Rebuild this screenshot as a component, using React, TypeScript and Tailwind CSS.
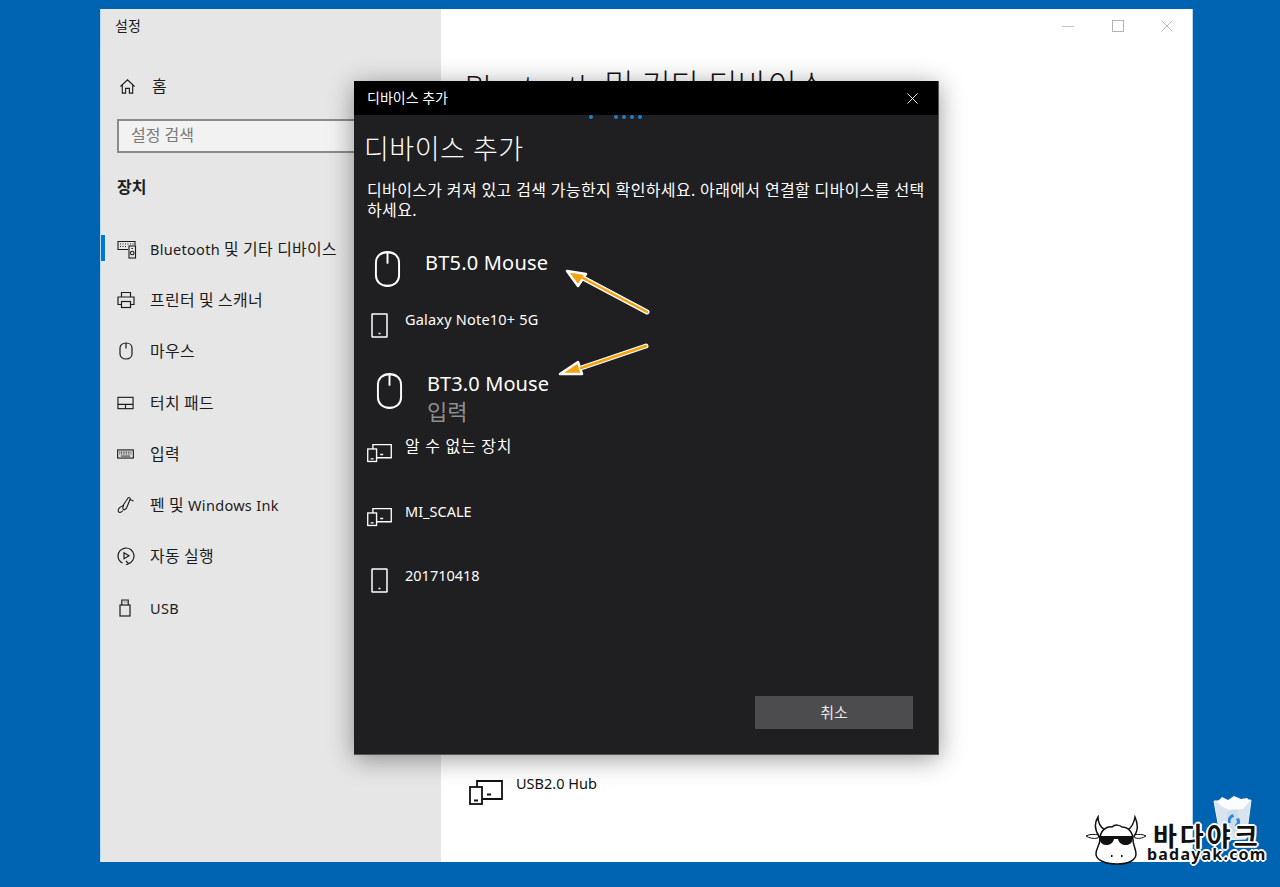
import React from 'react';

const FONT = "font-['Noto_Sans','Noto_Sans_CJK_KR',sans-serif]";

type IconProps = { className?: string };

// hangul runs sit a bit larger than the latin around them
function Mixed({ text }: { text: string }) {
	const parts = text.split(/([\uac00-\ud7a3]+)/);
	return (
		<>
			{parts.map((p, i) =>
				i % 2 === 1 ? (
					<span key={i} className="text-[1.1em]">
						{p}
					</span>
				) : (
					<React.Fragment key={i}>{p}</React.Fragment>
				),
			)}
		</>
	);
}

function Home({ className }: IconProps) {
	return (
		<svg viewBox="0 0 18 18" fill="none" stroke="currentColor" strokeWidth="1.2" className={className}>
			<path d="M1.500 9 9 2l7.500 7M3.500 7.500V16h3.500v-5h4v5h3.500V7.500" />
		</svg>
	);
}

function BtDevices({ className }: IconProps) {
	return (
		<svg viewBox="0 0 20 20" fill="none" stroke="currentColor" strokeWidth="1.1" className={className}>
			<path d="M11 10.500H1V2.500h17v4" />
			<path d="M3 5h1M5.500 5h1M8 5h1M10.500 5h1M13 5h1M15.500 5h1M3 7.500h1M5.500 7.500h1M8 7.500h1" />
			<rect x="12" y="7" width="6.500" height="12" />
			<circle cx="15.250" cy="14" r="1.800" />
			<path d="M14.500 9.500h1.500" />
		</svg>
	);
}

function Printer({ className }: IconProps) {
	return (
		<svg viewBox="0 0 18 18" fill="none" stroke="currentColor" strokeWidth="1.2" className={className}>
			<path d="M4.500 6V1.500h9V6M4.500 13.500H1V6h16v7.500h-3.500" />
			<rect x="4.500" y="10.500" width="9" height="6" />
		</svg>
	);
}

function Mouse({ className, sw = 1.2 }: IconProps & { sw?: number }) {
	return (
		<svg viewBox="0 0 14 18" preserveAspectRatio="none" fill="none" stroke="currentColor" strokeWidth={sw} className={className}>
			<path d="M1 6C1 3 3.500 1 7 1s6 2 6 5v6c0 3-2.500 5-6 5s-6-2-6-5Z" />
			<path d="M7 1v5.500" />
		</svg>
	);
}

function Touchpad({ className }: IconProps) {
	return (
		<svg viewBox="0 0 18 14" fill="none" stroke="currentColor" strokeWidth="1.2" className={className}>
			<rect x="1" y="1" width="16" height="12" />
			<path d="M1 8.500h16M9 8.500V13" />
		</svg>
	);
}

function Keyboard({ className }: IconProps) {
	return (
		<svg viewBox="0 0 18 10" fill="none" stroke="currentColor" className={className}>
			<rect x="0.700" y="0.700" width="16.600" height="8.600" strokeWidth="1.200" />
			<path d="M2.500 3h13M2.500 5h13" strokeWidth="1.100" strokeDasharray="1 .8" />
			<path d="M4 7.200h10" strokeWidth="1" />
		</svg>
	);
}

function Pen({ className }: IconProps) {
	return (
		<svg viewBox="0 0 18 18" fill="none" stroke="currentColor" strokeWidth="1.100" className={className}>
			<path d="M6 9.500 11 2c.8-1 2.500-.2 2.200 1L10 11c-.8 2-2.500 3-3.500 2.500s-.8-2 0-4Z" />
			<path d="M13 3.500 16.500 5M6 10C3 10.500 1 13 1.200 15c.3 2 3 1.800 4.800-.5" />
		</svg>
	);
}

function AutoPlay({ className }: IconProps) {
	return (
		<svg viewBox="0 0 18 18" fill="none" stroke="currentColor" strokeWidth="1.200" className={className}>
			<path d="M5.500 16C2.800 14.700 1 12 1 9a8 8 0 1 1 10.500 7.600" />
			<path d="M7 5.800v6l5-3Z" />
			<path d="m9 14 2.500 2.700L9 18" />
		</svg>
	);
}

function Usb({ className }: IconProps) {
	return (
		<svg viewBox="0 0 12 18" fill="none" stroke="currentColor" strokeWidth="1.200" className={className}>
			<rect x="1" y="6" width="10" height="11" />
			<path d="M2.800 6V1h6.400v5M4.800 3h.8M6.800 3h.8" />
		</svg>
	);
}

function Phone({ className }: IconProps) {
	return (
		<svg viewBox="0 0 17 25" fill="none" stroke="currentColor" strokeWidth="1.500" className={className}>
			<rect x="1" y="1" width="15" height="23" rx="0.500" />
			<path d="M7.500 20.500h2" />
		</svg>
	);
}

function Combo({ className }: IconProps) {
	return (
		<svg viewBox="0 0 34 25" fill="none" stroke="currentColor" strokeWidth="1.800" className={className}>
			<path d="M8 7V1h25v18H13" />
			<rect x="1" y="7" width="12" height="17" />
			<path d="M5 20.500h4M18 14.500h4" strokeWidth="2" />
		</svg>
	);
}

function CloseX({ className }: IconProps) {
	return (
		<svg viewBox="0 0 12 12" fill="none" stroke="currentColor" strokeWidth="1" className={className}>
			<path d="m.5.500 11 11M11.500.500l-11 11" />
		</svg>
	);
}

const NAV = [
	{ label: 'Bluetooth 및 기타 디바이스', icon: <BtDevices className="w-[20px] h-[20px]" />, active: true },
	{ label: '프린터 및 스캐너', icon: <Printer className="w-[18px] h-[18px]" /> },
	{ label: '마우스', icon: <Mouse className="w-[14px] h-[18px] ml-[2px]" /> },
	{ label: '터치 패드', icon: <Touchpad className="w-[17px] h-[14px]" /> },
	{ label: '입력', icon: <Keyboard className="w-[17px] h-[10px]" /> },
	{ label: '펜 및 Windows Ink', icon: <Pen className="w-[18px] h-[18px]" /> },
	{ label: '자동 실행', icon: <AutoPlay className="w-[18px] h-[18px]" /> },
	{ label: 'USB', icon: <Usb className="w-[12px] h-[18px] ml-[2px]" /> },
];

function Sidebar() {
	return (
		<aside className="w-[341px] shrink-0 bg-[#e6e6e6] text-[#1c1c1c] border-l border-[#bcdcf4] flex flex-col">
			<div className="pl-[14px] pt-[8px] text-[14px] leading-[18px]">설정</div>
			<div className="flex items-center h-[24px] mt-[39px] pl-[18px] text-[16px]">
				<Home className="w-[17px] h-[17px]" />
				<span className="ml-[16px]">홈</span>
			</div>
			<div className="mt-[21px] ml-[16px] w-[307px] h-[34px] bg-[#f2f2f2] border-2 border-[#8b8b8b] pl-[12px] pb-[3px] flex items-center text-[16px] text-[#7a7a7a]">
				설정 검색
			</div>
			<div className="mt-[23px] ml-[16px] text-[16px] font-bold leading-[22px]">장치</div>
			<nav className="mt-[25px] flex flex-col">
				{NAV.map(item => (
					<div key={item.label} className="relative h-[51.300px] flex items-center pl-[16px] text-[14.500px] leading-[20px] tracking-[0.3px]">
						{item.active && <span className="absolute left-0 top-[12px] w-[4px] h-[26px] bg-[#0078d7]" />}
						<span className="w-[33px] flex items-center shrink-0">{item.icon}</span>
						<span>
							<Mixed text={item.label} />
						</span>
					</div>
				))}
			</nav>
		</aside>
	);
}

function Main() {
	return (
		<main className="flex-1 bg-white flex flex-col text-[#111]">
			<div className="flex justify-end items-center h-[34px] text-[#b9b9b9]">
				<span className="w-[12px] h-[1px] bg-[#c4c4c4] mr-[38px]" />
				<span className="w-[12px] h-[12px] border border-[#b4b4b4] mr-[37px]" />
				<CloseX className="w-[12px] h-[12px] mr-[19px]" />
			</div>
			<h1 className="mt-[22px] ml-[24px] text-[29px] leading-[40px] font-light tracking-[0.2px]">
				<Mixed text="Bluetooth 및 기타 디바이스" />
			</h1>
			<div className="flex-1" />
			<div className="flex items-start ml-[28px] mb-[55px]">
				<Combo className="w-[34px] h-[29px] mt-[5px]" />
				<span className="ml-[13px] text-[14.500px] leading-[20px]">USB2.0 Hub</span>
			</div>
		</main>
	);
}

function Dialog() {
	return (
		<div className="absolute left-[254px] top-[72px] w-[585px] h-[674px] bg-[#1f1e21] text-white border-r border-b border-[#555] shadow-[0_4px_24px_rgba(0,0,0,0.4)] flex flex-col">
			<div className="h-[34px] shrink-0 bg-black flex items-center justify-between pl-[13px] pr-[20px] text-[14px]">
				<span className="pb-[2px]">디바이스 추가</span>
				<CloseX className="w-[11px] h-[11px]" />
			</div>
			<div className="relative h-0">
				<div className="absolute left-[235px] top-[0px] flex">
					<span className="w-[4px] h-[4px] rounded-full bg-[#1f7fc9]" />
					<span className="w-[4px] h-[4px] rounded-full bg-[#1f7fc9] ml-[21px]" />
					<span className="w-[4px] h-[4px] rounded-full bg-[#1f7fc9] ml-[4px]" />
					<span className="w-[4px] h-[4px] rounded-full bg-[#1f7fc9] ml-[4px]" />
					<span className="w-[4px] h-[4px] rounded-full bg-[#1f7fc9] ml-[4px]" />
				</div>
			</div>
			<h2 className="mt-[15px] ml-[10px] text-[27px] leading-[38px] font-light tracking-[0.5px]">디바이스 추가</h2>
			<p className="mt-[12px] ml-[13px] mr-[9px] text-[16px] leading-[20px] tracking-[0.35px]">
				디바이스가 켜져 있고 검색 가능한지 확인하세요. 아래에서 연결할 디바이스를 선택하세요.
			</p>
			<div className="mt-[32px] flex flex-col">
				<div className="flex items-start ml-[20px] h-[61px]">
					<Mouse className="w-[27px] h-[38px] -mt-[2px]" sw={1} />
					<span className="ml-[24px] -mt-[3px] text-[20px] leading-[28px] tracking-[0.2px]">BT5.0 Mouse</span>
				</div>
				<div className="flex items-start ml-[17px] h-[61px]">
					<Phone className="w-[17px] h-[25px]" />
					<span className="ml-[17px] -mt-[4px] text-[14.500px] leading-[20px] tracking-[0.2px]">Galaxy Note10+ 5G</span>
				</div>
				<div className="flex items-start ml-[22px] h-[69px]">
					<Mouse className="w-[27px] h-[38px] -mt-[2px]" sw={1} />
					<div className="ml-[24px] -mt-[4px] flex flex-col">
						<span className="text-[20px] leading-[28px] tracking-[0.1px]">BT3.0 Mouse</span>
						<span className="text-[22px] leading-[27px] text-[#8e8e8e]">입력</span>
					</div>
				</div>
				<div className="flex items-start ml-[13px] h-[64px]">
					<Combo className="w-[25px] h-[20px]" />
					<span className="ml-[13px] -mt-[7px] text-[16px] leading-[20px] tracking-[0.7px]">알 수 없는 장치</span>
				</div>
				<div className="flex items-start ml-[13px] h-[61px]">
					<Combo className="w-[25px] h-[20px]" />
					<span className="ml-[13px] -mt-[6px] text-[14.500px] leading-[20px]">MI_SCALE</span>
				</div>
				<div className="flex items-start ml-[17px]">
					<Phone className="w-[17px] h-[25px]" />
					<span className="ml-[17px] -mt-[3px] text-[14.500px] leading-[20px]">201710418</span>
				</div>
			</div>
			<div className="flex-1" />
			<div className="flex justify-end pr-[25px] pb-[25px]">
				<button className="w-[158px] h-[33px] bg-[#4c4b4d] text-[15px] text-[#e8e8e8]">취소</button>
			</div>
		</div>
	);
}

function Arrow({ line, head }: { line: string; head: string }) {
	return (
		<g strokeLinecap="round" strokeLinejoin="round">
			<path d={line} stroke="#fff" strokeWidth="5" fill="none" />
			<path d={head} stroke="#fff" strokeWidth="2.500" fill="#f5a00f" />
			<path d={line} stroke="#f5a00f" strokeWidth="2.500" fill="none" />
		</g>
	);
}

function Arrows() {
	return (
		<svg viewBox="0 0 1280 887" className="absolute inset-0 w-[1280px] h-[887px] pointer-events-none">
			<Arrow line="M647 312 583 278" head="M567 271 586 274 578 286Z" />
			<Arrow line="M646 346 581 368" head="M560 374 578 362 582 374Z" />
		</svg>
	);
}

function RecycleBin() {
	return (
		<svg viewBox="0 0 40 46" className="absolute left-[1213px] top-[795px] w-[40px] h-[46px]">
			<path d="M1 6 38 5 33 44 8 45Z" fill="#d9e4ee" stroke="#eef4f8" strokeWidth="1" />
			<path d="M4 7 9 2l6 3 6-4 7 3 6-1 3 3-7 8-14 1-8-4Z" fill="#fbfcfd" />
			<path d="M14 16 24 14 26 36 17 38Z" fill="#c6d6e4" opacity="0.6" />
			<path d="M15 28a7 7 0 0 1 5-9l1 3a4 4 0 0 0-3 6Z" fill="#2e86d6" />
			<path d="M26 23a7 7 0 0 1-3 10l-1-3a4 4 0 0 0 1-6Z" fill="#2e86d6" />
		</svg>
	);
}

function Logo() {
	return (
		<div className="absolute left-[1084px] top-[815px] flex items-center">
			<svg viewBox="0 0 64 52" className="w-[64px] h-[52px]">
				<path d="M2 21c4-2 8-2 13-1l-1 3c-5 1-9 0-12-2ZM62 21c-4-2-7-2-12-1l1 3c5 1 8 0 11-2Z" fill="#fff" stroke="#111" strokeWidth="1" />
				<path d="M15 21C10 14 11 7 14 2c0 6 2 10 7 13M50 21c5-6 4-12 1-19-1 6-3 10-7 13" fill="none" stroke="#111" strokeWidth="1.500" />
				<path d="M16 24c0-8 6-13 12-12 3-3 8-2 10 0 6 0 11 5 11 13 0 5 3 9 3 14 0 6-7 10-19 10S12 45 12 39c0-6 4-9 4-15Z" fill="#fff" stroke="#111" strokeWidth="1.500" />
				<path d="M14 21h36l-1 2c-1 5-3 7-7 7s-7-2-8-6h-4c-1 4-4 6-8 6s-6-3-7-7Z" fill="#111" />
				<path d="M27 41h1.500M37 41h1.500" stroke="#111" strokeWidth="2" />
			</svg>
			<div className="flex flex-col items-center ml-[-1px] mt-[4px] font-bold text-[#111] [text-shadow:-1px_-1px_0_#fff,1px_-1px_0_#fff,-1px_1px_0_#fff,1px_1px_0_#fff,0_2px_0_#fff,2px_0_0_#fff,-2px_0_0_#fff,0_-2px_0_#fff]">
				<span className="text-[26px] leading-[22px] tracking-[3px]">바다야크</span>
				<span className="text-[16px] leading-[14px] tracking-[1.200px]">badayak.com</span>
			</div>
		</div>
	);
}

export default function App() {
	return (
		<div className={`${FONT} relative w-[1280px] h-[887px] overflow-hidden bg-[#0063b1] pt-[9px] pl-[100px]`}>
			<div className="relative w-[1093px] h-[853px] flex border-r border-[#b8d4ea]">
				<Sidebar />
				<Main />
				<Dialog />
			</div>
			<RecycleBin />
			<Logo />
			<Arrows />
		</div>
	);
}
